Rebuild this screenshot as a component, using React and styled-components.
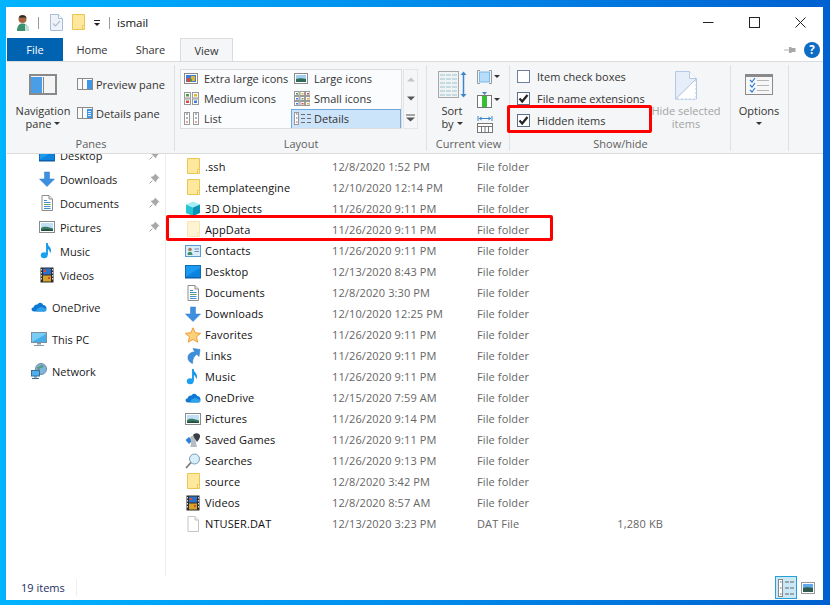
import React from "react";
import styled, { createGlobalStyle } from "styled-components";

const Global = createGlobalStyle`
  html, body { margin: 0; padding: 0; }
  body { width: 830px; height: 605px; overflow: hidden; font-family: "Open Sans", "Noto Sans", "Liberation Sans", sans-serif; font-size: 11px; color: #1a1a1a; }
`;

const Desktop = styled.div`
  width: 830px; height: 605px; box-sizing: border-box; padding: 7px 7px 5px 6px;
  background: linear-gradient(90deg, #00b4ff 0%, #0090ee 45%, #0060d0 100%);
`;
const Win = styled.div`
  height: 100%; background: #fff; display: flex; flex-direction: column;
`;
const TitleBar = styled.div`
  height: 31px; display: flex; align-items: center; padding-left: 10px; flex: none;
`;
const QuickIcon = styled.span`
  display: inline-flex; margin-left: ${p => p.$ml || 0}px;
`;
const TitleSep = styled.span`
  width: 1px; height: 12px; background: #9a9a9a; margin-left: ${p => p.$ml}px;
`;
const TitleText = styled.span`
  margin-left: 7px; font-size: 11.5px; color: #111; margin-top: -1px;
`;
const WinControls = styled.div`
  margin-left: auto; display: flex; align-items: center; padding-right: 17px; gap: 35px;
`;
const TabBar = styled.div`
  height: 23px; display: flex; align-items: stretch; padding-left: 1px; flex: none; position: relative;
`;
const FileTab = styled.div`
  width: 56px; background: #0063b1; color: #fff; display: flex; align-items: center; justify-content: center;
`;
const Tab = styled.div`
  width: ${p => p.$w}px; display: flex; align-items: center; justify-content: center; color: #333;
  box-sizing: border-box;
  ${p => p.$active && `background:#f5f6f7;border:1px solid #dadbdc;border-bottom:none;`}
`;
const TabHelp = styled.div`
  margin-left: auto; display: flex; align-items: center; gap: 8px; padding-right: 3px; padding-top: 1px;
`;
const Ribbon = styled.div`
  height: 93px; box-sizing: border-box; background: #f5f6f7; border-top: 1px solid #dadbdc; border-bottom: 1px solid #dadbdc;
  margin-left: 1px; display: flex; flex: none;
`;
const Group = styled.div`
  width: ${p => p.$w}px; flex: none; display: flex; flex-direction: column; position: relative;
  box-sizing: border-box;
  &::after { content: ""; position: absolute; right: 0; top: 3px; bottom: 2px; width: 1px; background: #dfe0e1; }
`;
const GroupBody = styled.div`
  flex: 1; display: flex; min-height: 0;
`;
const GroupLabel = styled.div`
  height: 20px; display: flex; align-items: center; justify-content: center; color: #5f5f5f; flex: none;
`;
const BigButton = styled.div`
  width: ${p => p.$w}px; flex: none; box-sizing: border-box; padding-top: ${p => p.$pt ?? 12}px; padding-left: ${p => p.$pl || 0}px;
  display: flex; flex-direction: column; align-items: center; color: ${p => p.$off ? "#a3a3a3" : "#333"};
`;
const BigIcon = styled.div`
  height: ${p => p.$h || 21}px; margin-bottom: ${p => p.$mb ?? 9}px; display: flex;
`;
const BigLine = styled.div`
  height: 13px; line-height: 13px; white-space: nowrap; display: flex; align-items: center; gap: 3px;
`;
const Caret = styled.span`
  display: inline-block; width: 0; height: 0; border-left: 3px solid transparent; border-right: 3px solid transparent;
  border-top: 3px solid #333;
`;
const PaneColumn = styled.div`
  display: flex; flex-direction: column; padding-top: 11px; gap: 7px;
`;
const PaneRow = styled.div`
  height: 22px; display: flex; align-items: center; gap: 3px; color: #333; white-space: nowrap;
`;
const Gallery = styled.div`
  margin: 7px 0 0 5px; width: 222px; height: 60px; box-sizing: border-box; background: #fbfcfd;
  outline: 1px solid #dcdddf; outline-offset: -1px; padding-left: 1px;
  display: grid; grid-template-columns: 110px 110px; grid-auto-rows: 20px;
`;
const GalleryItem = styled.div`
  display: flex; align-items: center; padding: 0 0 1px 3px; color: #333; white-space: nowrap; box-sizing: border-box;
  ${p => p.$sel && `background:#cce4f9;outline:1px solid #6ea8dc;outline-offset:-1px;`}
`;
const ThumbSlot = styled.span`
  width: 20px; flex: none; display: inline-flex; align-items: center;
`;
const GalleryScroll = styled.div`
  margin: 7px 0 0 1px; width: 15px; height: 60px; display: grid; grid-template-rows: repeat(3, 1fr);
  box-sizing: border-box; border: 1px solid #e4e5e6; background: #f5f6f7;
`;
const ScrollBtn = styled.div`
  display: flex; align-items: center; justify-content: center;
`;
const ViewTools = styled.div`
  display: flex; flex-direction: column; gap: 8px; padding-top: 8px; align-items: flex-start;
`;
const CheckColumn = styled.div`
  width: 132px; flex: none; box-sizing: border-box; padding: 3px 0 0 7px; display: flex; flex-direction: column;
`;
const CheckRow = styled.div`
  height: 22px; display: flex; align-items: center; gap: 7px; color: #333; position: relative; white-space: nowrap;
`;
const Check = styled.span`
  width: 13px; height: 13px; box-sizing: border-box; border: 1px solid ${p => p.$on ? "#5d6f8a" : "#6d7f9a"}; background: #fff;
  display: inline-flex; align-items: center; justify-content: center; flex: none;
`;
const RedBoxHidden = styled.div`
  position: absolute; left: -10px; top: -4px; width: 145px; height: 28px; box-sizing: border-box; border: 3px solid #f00; border-radius: 2px;
`;
const Main = styled.div`
  flex: 1; display: flex; min-height: 0; overflow: hidden;
`;
const Nav = styled.div`
  width: 159px; flex: none; border-right: 1px solid #eeeeee; overflow: hidden;
`;
const NavList = styled.div`
  margin-top: -11px; display: flex; flex-direction: column;
`;
const NavRow = styled.div`
  height: 24px; display: flex; align-items: center; padding-left: ${p => p.$indent}px; gap: 5px; color: #1a1a1a; position: relative;
  margin-top: ${p => p.$mt || 0}px; flex: none;
`;
const NavPin = styled.span`
  position: absolute; left: 143px; top: 6px; display: inline-flex;
`;
const FileList = styled.div`
  flex: 1; padding: 2px 0 0 19px; display: flex; flex-direction: column;
`;
const FileRow = styled.div`
  height: 21px; display: grid; grid-template-columns: 16px 131px 145px 100px 86px; align-items: center; position: relative; flex: none;
  letter-spacing: .12px;
`;
const FileName = styled.span`
  color: #111; padding-left: 4px; white-space: nowrap;
`;
const FileMeta = styled.span`
  color: #666; white-space: nowrap;
`;
const FileSize = styled.span`
  color: #666; text-align: right; white-space: nowrap;
`;
const RedBoxRow = styled.div`
  position: absolute; left: -19px; top: -4px; width: 387px; height: 26px; box-sizing: border-box; border: 3px solid #f00; border-radius: 2px;
`;
const StatusBar = styled.div`
  height: 24px; flex: none; display: flex; align-items: flex-start; padding-left: 15px;
`;
const StatusText = styled.span`
  color: #1d2f63; padding-right: 11px; height: 17px; line-height: 17px; border-right: 1px solid #eee; margin-top: 3px;
`;
const StatusViews = styled.div`
  margin-left: auto; display: flex; align-items: center; gap: 4px; padding-right: 8px;
`;
const ViewDetails = styled.div`
  width: 22px; height: 23px; box-sizing: border-box; background: #cbe8f6; border: 1px solid #26a0da; display: flex; align-items: center; justify-content: center;
`;

/* ---------- drawings ---------- */
const Svg = ({ s = 16, h, vb, children, className }) => (
  <svg className={className} width={s} height={h || s} viewBox={vb || `0 0 ${s} ${h || s}`}>{children}</svg>
);
const BaseSvg = styled(Svg)`
  display: block; flex: none;
`;
const FolderSvg = styled(BaseSvg)`
  margin-top: -2px; opacity: ${p => p.$faded ? 0.45 : 1};
`;

const Folder = ({ faded }) => (
  <FolderSvg s={16} $faded={faded}>
    <path d="M2.5 .5h12v15h-12z" fill="#fde89e" stroke="#ecc650" />
    <path d="M12.500 15.500v-4h2" fill="#fff3c6" stroke="#ecc650" />
  </FolderSvg>
);
const Cube = () => (
  <BaseSvg>
    <path d="M8 0.5 15 3.5 8 6.5 1 3.5z" fill="#a6eef3" />
    <path d="M1 3.5 8 6.5V15L1 12z" fill="#27c4d4" />
    <path d="M15 3.5 8 6.5V15l7-3z" fill="#0d92b8" />
  </BaseSvg>
);
const ContactsIc = () => (
  <BaseSvg>
    <rect x="0.5" y="2.5" width="15" height="11" fill="#d8ecfa" stroke="#5a9bd0" />
    <circle cx="5" cy="6.5" r="1.8" fill="#a67c5b" />
    <path d="M2.5 12c0-2.5 1-3 2.5-3s2.500.5 2.500 3z" fill="#3f8f68" />
    <path d="M9.500 6h4.500M9.500 8.500h4.500" stroke="#6a8fb0" />
  </BaseSvg>
);
const DesktopIc = () => (
  <BaseSvg>
    <rect x="0.5" y="1.500" width="15" height="12" fill="#1a9af0" stroke="#0f6db8" />
    <path d="M1 12.500 15 4v9H1z" fill="#0b84e0" />
    <rect x="0" y="13" width="16" height="1.500" fill="#0c5fa8" />
  </BaseSvg>
);
const DocIc = () => (
  <BaseSvg>
    <path d="M3 .5h7l3.500 3.500v11.500H3z" fill="#fff" stroke="#8d8d8d" />
    <path d="M10 .5V4h3.500" fill="#e8e8e8" stroke="#8d8d8d" />
    <path d="M5 5.500h3M5 7.500h6.500M5 11.500h6.500M5 13.500h6.500" stroke="#3d8fd8" />
    <path d="M5 9.500h6.500" stroke="#6aa15f" />
  </BaseSvg>
);
const DownloadIc = () => (
  <BaseSvg>
    <path d="M5.500 1h5v7h5L8 15.500.5 8h5z" fill="#3d8fe0" stroke="#2c78c8" strokeWidth=".5" />
  </BaseSvg>
);
const Star = () => (
  <BaseSvg>
    <path d="M8 .8 10.200 5.800 15.600 6.300 11.500 9.900 12.800 15.200 8 12.400 3.200 15.200 4.500 9.900.4 6.300 5.800 5.800z" fill="#fbd27a" stroke="#ef9b3a" />
  </BaseSvg>
);
const LinkIc = () => (
  <BaseSvg>
    <path d="M8 0.500 15 1.500 14 8.500 11.800 6.300C9 8 7.500 11 7.500 15.500 4 14 2.500 11.500 3 8.500 3.500 6 6 4 9.800 3.700z" fill="#3b8fdc" stroke="#2a6fb8" strokeWidth=".5" />
  </BaseSvg>
);
const MusicIc = () => (
  <BaseSvg>
    <path d="M8 0v12" stroke="#1296ea" strokeWidth="1.800" />
    <ellipse cx="5.200" cy="12.300" rx="3.400" ry="3" fill="#1ba1f2" />
    <path d="M8.500 0c.5 3.500 3.500 4 3.500 7.500 0 1.200-.4 2.200-1 2.800.2-2.500-1.500-4.300-3-4.800z" fill="#1296ea" />
  </BaseSvg>
);
const OneDriveIc = () => (
  <BaseSvg>
    <path d="M2.500 8.500C3 6 5 5 6.500 5.500 7.800 3 11 3 12.200 6 14 6 15.500 7.500 15.500 9.500 15.500 11 14.500 12.500 13 12.500H3C1.500 12.500.5 11.500.5 10.300.5 9 1.500 8.500 2.500 8.500z" fill="#0f78d4" />
    <path d="M6 12.500c-1-1.800.2-3.500 2-3.500 1-1.500 3.500-1.500 4.500 0 1.700 0 3 1 3 2.500-.4.600-1.200 1-2.500 1z" fill="#2ea3ea" />
  </BaseSvg>
);
const PicturesIc = () => (
  <BaseSvg>
    <rect x=".5" y="2.500" width="15" height="11" fill="#fff" stroke="#8a8a8a" />
    <rect x="2" y="4" width="12" height="8" fill="#bfe0f6" />
    <path d="M2 9c3-2 6-1.500 12 .5V12H2z" fill="#3b7a62" />
    <path d="M2 11c4-1 8-.8 12 0v1H2z" fill="#244c40" />
  </BaseSvg>
);
const ThisPc = () => (
  <BaseSvg>
    <rect x=".5" y="1.500" width="15" height="10" fill="#79ccf4" stroke="#7b8f9e" />
    <path d="M1 11 15 3v8z" fill="#45aee6" />
    <path d="M6 12h4v1.500H6zM3 14h10v1H3z" fill="#8a9aa8" />
  </BaseSvg>
);
const NetworkIc = () => (
  <BaseSvg>
    <circle cx="10" cy="6" r="5.500" fill="#7fb4dc" stroke="#6d8ca8" />
    <path d="M6 4c2 0 4-2 6-2 1 1 0 3-2 3s-1 3-3 3z" fill="#5a9b7a" />
    <rect x=".5" y="7.500" width="8" height="5.500" fill="#4fb0ea" stroke="#3a6f98" />
    <path d="M3 13.500h3v1H3zM1 15h7v1H1z" fill="#3a6f98" />
  </BaseSvg>
);
const GamesIc = () => (
  <BaseSvg>
    <path d="M.5 8 4 5l2 2v3L4 12z" fill="#2f7fd8" />
    <path d="M5 15c2-3 1-7 0-9 1-3 4-3 5 0 1 3 1 6 2 9z" fill="#b5bdc4" />
    <path d="M8 3c2-2.500 6-2.500 7 .5.500 2.500-2 5-3 6.500-1-2-3-4-4-7z" fill="#3a3f46" />
  </BaseSvg>
);
const SearchIc = () => (
  <BaseSvg>
    <circle cx="9.500" cy="6" r="5" fill="#d7eefb" stroke="#7d9bb0" />
    <path d="M6 9.500 1 15" stroke="#7a7a7a" strokeWidth="1.800" />
  </BaseSvg>
);
const VideoIc = () => (
  <BaseSvg>
    <rect x="1.500" y=".5" width="13" height="15" fill="#2b2b2b" />
    <rect x="4" y="1.500" width="8" height="6" fill="#2f6fc8" />
    <rect x="4" y="8.500" width="8" height="6" fill="#d9a32b" />
    <path d="M5 3h2v2H5zM9 10h2v2H9z" fill="#dd4b2a" />
    <path d="M2.500 2v12M13.500 2v12" stroke="#ddd" strokeDasharray="1.500 1.500" />
  </BaseSvg>
);
const FileIc = () => (
  <BaseSvg>
    <path d="M3 .5h7l3.500 3.500v11.500H3z" fill="#fff" stroke="#c4c4c4" />
    <path d="M10 .5V4h3.500" fill="#f0f0f0" stroke="#c4c4c4" />
  </BaseSvg>
);
const Pin = () => (
  <BaseSvg s={11} vb="0 0 11 11">
    <path d="M6 0.500 10.500 5 9 5.500 7.500 7.500 7 9.500 1.500 4 3.500 3.500 5.500 2z" fill="#a8a8a8" />
    <path d="M3.500 7.500 .5 10.500" stroke="#a8a8a8" />
  </BaseSvg>
);
const UserIc = () => (
  <BaseSvg s={14} h={18} vb="0 0 14 18">
    <circle cx="6.500" cy="5" r="4" fill="#a8643f" />
    <path d="M3 3.500C3.500.5 10 .5 10.500 4 8 3 5 4 3 3.500z" fill="#2a2a2a" />
    <path d="M1 17c0-5 2-7.500 5.500-7.500S13 12 13 17z" fill="#3f9070" />
    <path d="M9 10l4 3v4H9z" fill="#bfe0d4" />
  </BaseSvg>
);
const CheckDocIc = () => (
  <BaseSvg s={13} h={17} vb="0 0 13 17">
    <path d="M.5.500h8l4 4v12H.5z" fill="#eef3fa" stroke="#a9bcd8" />
    <path d="M8.500.500v4h4" fill="#fff" stroke="#a9bcd8" />
    <path d="M3 9.500 5.500 12 10 7" fill="none" stroke="#b0bdd0" strokeWidth="1.200" />
  </BaseSvg>
);
const QuickFolder = () => (
  <BaseSvg s={14} h={17} vb="0 0 14 17">
    <path d="M.5.500h12v15H.5z" fill="#fde89e" stroke="#ecc650" />
    <path d="M10.500 15.500v-4h2" fill="#fff3c6" stroke="#ecc650" />
  </BaseSvg>
);
const QuickDrop = () => (
  <BaseSvg s={8} h={8} vb="0 0 8 8">
    <path d="M1 1.500h6" stroke="#222" />
    <path d="M1 4h6L4 7z" fill="#222" />
  </BaseSvg>
);
const MinIc = () => <BaseSvg s={11}><path d="M0 5.500h10.500" stroke="#222" /></BaseSvg>;
const MaxIc = () => <BaseSvg s={11}><rect x=".5" y=".5" width="10" height="10" fill="none" stroke="#222" /></BaseSvg>;
const CloseIc = () => <BaseSvg s={11}><path d="M.5.500l10 10M10.500.500l-10 10" stroke="#222" /></BaseSvg>;
const RibbonPin = () => (
  <BaseSvg s={12} h={8} vb="0 0 12 8">
    <path d="M0 4h5" stroke="#b4b4b4" />
    <path d="M5 1h2l1 1h3.500v4H8L7 7H5z" fill="#a8a8a8" />
  </BaseSvg>
);
const HelpIc = () => (
  <BaseSvg>
    <circle cx="8" cy="8" r="8" fill="#0f6cc4" />
    <text x="8" y="12.200" textAnchor="middle" fontSize="11.500" fontWeight="700" fontFamily="Open Sans" fill="#fff">?</text>
  </BaseSvg>
);
const NavPaneIc = () => (
  <BaseSvg s={28} h={21} vb="0 0 28 21">
    <rect x="1" y="1" width="26" height="19" fill="#f4f4f4" stroke="#8a8a8a" strokeWidth="2" />
    <rect x="2" y="3" width="11" height="16" fill="#4a9ee8" />
    <path d="M14 3h1v16h-1z" fill="#888" />
    <path d="M22 2.500h1M24 2.500h1" stroke="#fff" />
  </BaseSvg>
);
const PreviewIc = ({ details }) => (
  <BaseSvg s={16} h={12} vb="0 0 16 12">
    <rect x=".5" y=".5" width="15" height="11" fill="#fafafa" stroke="#8a8a8a" />
    <path d="M5.500 1v10" stroke="#8a8a8a" />
    <rect x="10" y="2" width="5" height="9" fill="#3d97e6" />
    {details && <path d="M11 4.500h3M11 6.500h3M11 8.500h3" stroke="#d8ecfb" />}
  </BaseSvg>
);
const Thumb = ({ kind }) => {
  if (kind === "xl" || kind === "l") {
    return (
      <BaseSvg s={14} h={11} vb="0 0 14 11">
        <rect x=".5" y=".5" width="13" height="10" fill="#fff" stroke="#8a8a8a" />
        {kind === "xl"
          ? <><rect x="2" y="2" width="10" height="7" fill="#3d7ed8" /><rect x="3" y="5" width="3" height="4" fill="#d9483b" /><rect x="7" y="3" width="4" height="5" fill="#e6b32e" /><rect x="6" y="6" width="2" height="3" fill="#4f9a4a" /></>
          : <><rect x="2" y="2" width="10" height="7" fill="#9fd0ee" /><path d="M2 6c3-1 6-1 10 0v3H2z" fill="#2f6a58" /></>}
      </BaseSvg>
    );
  }
  if (kind === "m") {
    return (
      <BaseSvg s={15} h={13} vb="0 0 15 13">
        <rect x=".5" y=".5" width="6" height="5.500" fill="#fff" stroke="#999" />
        <rect x="8.500" y=".5" width="6" height="5.500" fill="#fff" stroke="#999" />
        <rect x=".5" y="7" width="6" height="5.500" fill="#fff" stroke="#999" />
        <rect x="8.500" y="7" width="6" height="5.500" fill="#fff" stroke="#999" />
        <rect x="2" y="2" width="3" height="2.500" fill="#4f9a4a" /><rect x="10" y="2" width="3" height="2.500" fill="#e6b32e" />
        <rect x="2" y="8.500" width="3" height="2.500" fill="#d9483b" /><rect x="10" y="8.500" width="3" height="2.500" fill="#3d7ed8" />
      </BaseSvg>
    );
  }
  if (kind === "s") {
    const cols = ["#4f9a4a", "#e6b32e", "#d9483b", "#3d7ed8", "#6aa15f", "#e6b32e", "#3d7ed8", "#d9483b", "#e6b32e"];
    return (
      <BaseSvg s={16} h={15} vb="0 0 16 15">
        {cols.map((c, i) => (
          <g key={i}>
            <rect x={.5 + (i % 3) * 5.500} y={.5 + Math.floor(i / 3) * 5} width="4.500" height="4" fill="#fff" stroke="#999" />
            <rect x={2 + (i % 3) * 5.500} y={2 + Math.floor(i / 3) * 5} width="2" height="1.500" fill={c} />
          </g>
        ))}
      </BaseSvg>
    );
  }
  if (kind === "list") {
    return (
      <BaseSvg s={16} h={13} vb="0 0 16 13">
        {[0, 9].map(x => (
          <g key={x}>
            <rect x={x + .5} y=".5" width="5" height="12" fill="#fff" stroke="#999" />
            <path d={`M${x + 2} 2h2M${x + 2} 6h2`} stroke="#5a6a80" />
            <path d={`M${x + 2} 10h2`} stroke="#d9483b" />
          </g>
        ))}
      </BaseSvg>
    );
  }
  return (
    <BaseSvg s={18} h={13} vb="0 0 18 13">
      <rect x=".5" y=".5" width="4" height="12" fill="#fff" stroke="#999" />
      <path d="M2 2h1.500M2 6h1.500" stroke="#5a6a80" />
      <path d="M2 10h1.500" stroke="#d9483b" />
      <path d="M7 2.500h4M13 2.500h4M7 6.500h4M13 6.500h4M7 10.500h4M13 10.500h4" stroke="#6b6b6b" />
    </BaseSvg>
  );
};
const SortIc = () => (
  <BaseSvg s={29} h={27} vb="0 0 29 27">
    <rect x=".5" y=".5" width="20" height="26" fill="#eef4f4" stroke="#a8a8a8" />
    {[4, 8, 12, 16, 20, 24].map(y => <path key={y} d={`M2 ${y}h5M8 ${y}h5M14 ${y}h5`} stroke="#9fc0d0" />)}
    <path d="M25.500 2v23" stroke="#3d87c8" strokeWidth="1.500" />
    <path d="M22.500 4 25.500 .5 28.500 4zM22.500 23l3 3.500 3-3.500z" fill="#3d87c8" />
  </BaseSvg>
);
const ToolGroupBy = () => (
  <BaseSvg s={23} h={14} vb="0 0 23 14">
    <path d="M3 .5H.5v13H3M12 .5h2.500v13H12" fill="none" stroke="#999" />
    <rect x="2.500" y="2" width="10" height="10" fill="#b5dcf8" stroke="#7db8e6" />
    <path d="M17 5h6l-3 3z" fill="#333" />
  </BaseSvg>
);
const ToolAddCol = () => (
  <BaseSvg s={23} h={16} vb="0 0 23 16">
    <rect x=".5" y="3.500" width="14" height="12" fill="#fff" stroke="#777" />
    <rect x="5" y="4" width="5" height="11" fill="#34c034" />
    <path d="M5 0h5L7.500 3z" fill="#3d87c8" />
    <path d="M17 6h6l-3 3z" fill="#333" />
  </BaseSvg>
);
const ToolFit = () => (
  <BaseSvg s={16} h={17} vb="0 0 16 17">
    <path d="M1 0v5M15 0v5M2 2.500h12" stroke="#3d87c8" />
    <path d="M2 2.500 4.500 .5v4zM14 2.500 11.500 .5v4z" fill="#3d87c8" />
    <rect x=".5" y="7.500" width="15" height="9" fill="#fff" stroke="#777" />
    <path d="M1 10.500h14M4.500 11v5M8 11v5M11.500 11v5" stroke="#777" />
  </BaseSvg>
);
const HideIc = () => (
  <BaseSvg s={22} h={29} vb="0 0 22 29">
    <path d="M.5.500h14l7 7v20.500H.5z" fill="#e6eefa" stroke="#b5c8e4" />
    <path d="M14.500.500v7h7" fill="#fff" stroke="#b5c8e4" />
    <path d="M.5 28 21 8" stroke="#b5c8e4" />
    <path d="M21 9v19H2" fill="#fff" stroke="#b5c8e4" strokeDasharray="2 2" />
  </BaseSvg>
);
const OptionsIc = () => (
  <BaseSvg s={28} h={21} vb="0 0 28 21">
    <rect x=".5" y=".5" width="27" height="20" fill="#f7f7f7" stroke="#8a8a8a" />
    <rect x="1" y="1" width="26" height="2" fill="#8a8a8a" />
    {[6, 11, 16].map(y => (
      <g key={y}>
        <path d={`M5 ${y}l2 2 3-4`} fill="none" stroke="#2f7fd8" strokeWidth="1.200" />
        <path d={`M12 ${y + .5}h12`} stroke="#b5b5b5" />
      </g>
    ))}
  </BaseSvg>
);
const CheckMark = () => (
  <BaseSvg s={11} vb="0 0 11 11">
    <path d="M1.500 5.500 4.200 8.500 9.500 2" fill="none" stroke="#222" strokeWidth="2.200" />
  </BaseSvg>
);
const ScrollUp = ({ c }) => <BaseSvg s={8} h={5} vb="0 0 8 5"><path d="M0 4.500 4 .5l4 4z" fill={c} /></BaseSvg>;
const ScrollDown = ({ c }) => <BaseSvg s={8} h={5} vb="0 0 8 5"><path d="M0 .5l4 4 4-4z" fill={c} /></BaseSvg>;
const ScrollMore = () => <BaseSvg s={9} h={8} vb="0 0 9 8"><path d="M0 1h9" stroke="#555" /><path d="M0 3.500l4.500 4 4.500-4z" fill="#555" /></BaseSvg>;
const StatusDetails = () => (
  <BaseSvg s={16} h={18} vb="0 0 16 18">
    <rect x=".5" y=".5" width="4" height="17" fill="#fff" stroke="#888" />
    <path d="M2 3h1.500M2 9h1.500M2 15h1.500" stroke="#5a6a80" />
    <path d="M7 3h4M12 3h4M7 9h4M12 9h4M7 15h4M12 15h4" stroke="#666" />
  </BaseSvg>
);
const StatusLarge = () => (
  <BaseSvg s={14} h={12} vb="0 0 14 12">
    <rect x=".5" y=".5" width="13" height="11" fill="#fff" stroke="#999" />
    <rect x="2" y="2" width="10" height="8" fill="#5fa8ec" />
    <path d="M2 6c3-1.200 6-.8 10 0v4H2z" fill="#2f5a50" />
  </BaseSvg>
);

/* ---------- data ---------- */
const navItems = [
  { n: "Desktop", I: DesktopIc, pin: 1, indent: 33 },
  { n: "Downloads", I: DownloadIc, pin: 1, indent: 33 },
  { n: "Documents", I: DocIc, pin: 1, indent: 33 },
  { n: "Pictures", I: PicturesIc, pin: 1, indent: 33 },
  { n: "Music", I: MusicIc, indent: 33 },
  { n: "Videos", I: VideoIc, indent: 33 },
  { n: "OneDrive", I: OneDriveIc, indent: 25, mt: 8 },
  { n: "This PC", I: ThisPc, indent: 25, mt: 8 },
  { n: "Network", I: NetworkIc, indent: 25, mt: 8 },
];
const files = [
  [".ssh", "12/8/2020 1:52 PM", "File folder", Folder],
  [".templateengine", "12/10/2020 12:14 PM", "File folder", Folder],
  ["3D Objects", "11/26/2020 9:11 PM", "File folder", Cube],
  ["AppData", "11/26/2020 9:11 PM", "File folder", Folder, true],
  ["Contacts", "11/26/2020 9:11 PM", "File folder", ContactsIc],
  ["Desktop", "12/13/2020 8:43 PM", "File folder", DesktopIc],
  ["Documents", "12/8/2020 3:30 PM", "File folder", DocIc],
  ["Downloads", "12/10/2020 12:25 PM", "File folder", DownloadIc],
  ["Favorites", "11/26/2020 9:11 PM", "File folder", Star],
  ["Links", "11/26/2020 9:11 PM", "File folder", LinkIc],
  ["Music", "11/26/2020 9:11 PM", "File folder", MusicIc],
  ["OneDrive", "12/15/2020 7:59 AM", "File folder", OneDriveIc],
  ["Pictures", "11/26/2020 9:14 PM", "File folder", PicturesIc],
  ["Saved Games", "11/26/2020 9:11 PM", "File folder", GamesIc],
  ["Searches", "11/26/2020 9:13 PM", "File folder", SearchIc],
  ["source", "12/8/2020 3:42 PM", "File folder", Folder],
  ["Videos", "12/8/2020 8:57 AM", "File folder", VideoIc],
  ["NTUSER.DAT", "12/13/2020 3:23 PM", "DAT File", FileIc, false, "1,280 KB"],
];
const layouts = [
  ["Extra large icons", "xl"], ["Large icons", "l"],
  ["Medium icons", "m"], ["Small icons", "s"],
  ["List", "list"], ["Details", "d"],
];

export default function App() {
  return (
    <Desktop>
      <Global />
      <Win>
        <TitleBar>
          <QuickIcon><UserIc /></QuickIcon>
          <TitleSep $ml={8} />
          <QuickIcon $ml={11}><CheckDocIc /></QuickIcon>
          <QuickIcon $ml={9}><QuickFolder /></QuickIcon>
          <QuickIcon $ml={7}><QuickDrop /></QuickIcon>
          <TitleSep $ml={8} />
          <TitleText>ismail</TitleText>
          <WinControls><MinIc /><MaxIc /><CloseIc /></WinControls>
        </TitleBar>
        <TabBar>
          <FileTab>File</FileTab>
          <Tab $w={58}>Home</Tab>
          <Tab $w={59}>Share</Tab>
          <Tab $w={53} $active>View</Tab>
          <TabHelp><RibbonPin /><HelpIc /></TabHelp>
        </TabBar>
        <Ribbon>
          <Group $w={168}>
            <GroupBody>
              <BigButton $w={70} $pl={2}>
                <BigIcon><NavPaneIc /></BigIcon>
                <BigLine>Navigation</BigLine>
                <BigLine>pane <Caret /></BigLine>
              </BigButton>
              <PaneColumn>
                <PaneRow><PreviewIc />Preview pane</PaneRow>
                <PaneRow><PreviewIc details />Details pane</PaneRow>
              </PaneColumn>
            </GroupBody>
            <GroupLabel>Panes</GroupLabel>
          </Group>
          <Group $w={252}>
            <GroupBody>
              <Gallery>
                {layouts.map(([t, k]) => (
                  <GalleryItem key={k} $sel={k === "d"}><ThumbSlot><Thumb kind={k} /></ThumbSlot>{t}</GalleryItem>
                ))}
              </Gallery>
              <GalleryScroll>
                <ScrollBtn><ScrollUp c="#c4c4c4" /></ScrollBtn>
                <ScrollBtn><ScrollDown c="#555" /></ScrollBtn>
                <ScrollBtn><ScrollMore /></ScrollBtn>
              </GalleryScroll>
            </GroupBody>
            <GroupLabel>Layout</GroupLabel>
          </Group>
          <Group $w={83}>
            <GroupBody>
              <BigButton $w={50} $pt={9}>
                <BigIcon $h={27} $mb={6}><SortIc /></BigIcon>
                <BigLine>Sort</BigLine>
                <BigLine>by <Caret /></BigLine>
              </BigButton>
              <ViewTools>
                <ToolGroupBy />
                <ToolAddCol />
                <ToolFit />
              </ViewTools>
            </GroupBody>
            <GroupLabel>Current view</GroupLabel>
          </Group>
          <Group $w={221}>
            <GroupBody>
              <CheckColumn>
                <CheckRow><Check />Item check boxes</CheckRow>
                <CheckRow><Check $on><CheckMark /></Check>File name extensions</CheckRow>
                <CheckRow><Check $on><CheckMark /></Check>Hidden items<RedBoxHidden /></CheckRow>
              </CheckColumn>
              <BigButton $w={88} $off $pt={9}>
                <BigIcon $h={29} $mb={4}><HideIc /></BigIcon>
                <BigLine>Hide selected</BigLine>
                <BigLine>items</BigLine>
              </BigButton>
            </GroupBody>
            <GroupLabel>Show/hide</GroupLabel>
          </Group>
          <Group $w={58}>
            <GroupBody>
              <BigButton $w={56}>
                <BigIcon><OptionsIc /></BigIcon>
                <BigLine>Options</BigLine>
                <BigLine><Caret /></BigLine>
              </BigButton>
            </GroupBody>
            <GroupLabel />
          </Group>
        </Ribbon>
        <Main>
          <Nav>
            <NavList>
              {navItems.map(({ n, I, pin, indent, mt }) => (
                <NavRow key={n} $indent={indent} $mt={mt}>
                  <I />{n}
                  {pin && <NavPin><Pin /></NavPin>}
                </NavRow>
              ))}
            </NavList>
          </Nav>
          <FileList>
            {files.map(([name, date, type, I, faded, size]) => (
              <FileRow key={name}>
                <I faded={faded} />
                <FileName>{name}</FileName>
                <FileMeta>{date}</FileMeta>
                <FileMeta>{type}</FileMeta>
                <FileSize>{size}</FileSize>
                {faded && <RedBoxRow />}
              </FileRow>
            ))}
          </FileList>
        </Main>
        <StatusBar>
          <StatusText>19 items</StatusText>
          <StatusViews>
            <ViewDetails><StatusDetails /></ViewDetails>
            <StatusLarge />
          </StatusViews>
        </StatusBar>
      </Win>
    </Desktop>
  );
}
